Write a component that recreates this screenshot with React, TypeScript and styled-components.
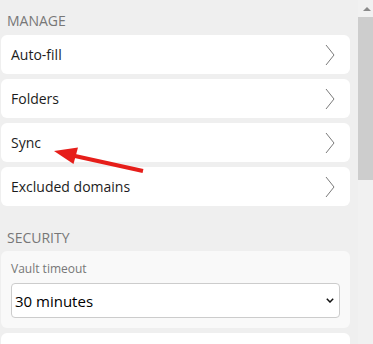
import React from "react";
import styled, { createGlobalStyle } from "styled-components";

const GlobalStyle = createGlobalStyle`
  html, body {
    margin: 0;
    padding: 0;
    background: #efefef;
    font-family: "Open Sans", "Liberation Sans", sans-serif;
  }
`;

const Page = styled.div`
  position: relative;
  display: flex;
  width: 373px;
  height: 344px;
  overflow: hidden;
  background: #efefef;
`;

const Content = styled.div`
  width: 349px;
  padding: 0 4px 0 1px;
  flex: 0 0 auto;
`;

const SectionTitle = styled.div<{ $top: number; $bottom: number }>`
  font-size: 14px;
  line-height: 19px;
  color: #777777;
  text-transform: uppercase;
  padding: ${(p) => p.$top}px 0 ${(p) => p.$bottom}px 6px;
`;

const CardList = styled.div`
  display: flex;
  flex-direction: column;
  gap: 5px;
`;

const Card = styled.div`
  display: flex;
  align-items: center;
  justify-content: space-between;
  height: 39px;
  padding: 0 15px 0 10px;
  background: #ffffff;
  border-radius: 6px;
  font-size: 14px;
  color: #1c1c1c;
  cursor: pointer;
`;

const FieldCard = styled.div`
  background: #f9f9f9;
  border-radius: 6px;
  padding: 10px;
`;

const FieldLabel = styled.div`
  font-size: 12px;
  line-height: 16px;
  color: #777777;
  margin-bottom: 6px;
`;

const SelectWrap = styled.div`
  position: relative;
`;

const Select = styled.select`
  appearance: none;
  width: 100%;
  height: 35px;
  box-sizing: border-box;
  border: 1px solid #cccccc;
  border-radius: 4px;
  background: #ffffff;
  padding: 0 24px 0 3px;
  font-family: "Open Sans", "Liberation Sans", sans-serif;
  font-size: 15px;
  color: #000000;
  outline: none;
`;

const SelectCaret = styled.svg`
  position: absolute;
  right: 6px;
  top: 15px;
  pointer-events: none;
`;

const NextCard = styled.div`
  height: 30px;
  margin-top: 5px;
  background: #ffffff;
  border-radius: 6px;
`;

const Scrollbar = styled.div`
  width: 17px;
  flex: 0 0 auto;
  margin-left: 4px;
  background: #f1f1f1;
  display: flex;
  flex-direction: column;
`;

const ScrollButton = styled.div`
  height: 17px;
  display: flex;
  align-items: center;
  justify-content: center;
`;

const ScrollThumb = styled.div`
  height: 163px;
  background: #cdcdcd;
`;

const Edge = styled.div`
  flex: 1;
  background: #f5f5f5;
`;

const Annotation = styled.svg`
  position: absolute;
  left: 0;
  top: 0;
  pointer-events: none;
`;

function Chevron() {
  return (
    <svg width="10" height="22" viewBox="0 0 10 22">
      <path d="M1 1 L9 11 L1 21" fill="none" stroke="#7a7a7a" strokeWidth="1" />
    </svg>
  );
}

const manageItems = ["Auto-fill", "Folders", "Sync", "Excluded domains"];

export default function App() {
  return (
    <Page>
      <GlobalStyle />
      <Content>
        <SectionTitle $top={11} $bottom={5}>Manage</SectionTitle>
        <CardList>
          {manageItems.map((item) => (
            <Card key={item}>
              <span>{item}</span>
              <Chevron />
            </Card>
          ))}
        </CardList>
        <SectionTitle $top={22} $bottom={4}>Security</SectionTitle>
        <FieldCard>
          <FieldLabel>Vault timeout</FieldLabel>
          <SelectWrap>
            <Select defaultValue="30">
              <option value="30">30 minutes</option>
            </Select>
            <SelectCaret width="8" height="5" viewBox="0 0 8 5">
              <path d="M0.8 0.8 L4 4 L7.2 0.8" fill="none" stroke="#111" strokeWidth="1.5" />
            </SelectCaret>
          </SelectWrap>
        </FieldCard>
        <NextCard />
      </Content>
      <Scrollbar>
        <ScrollButton>
          <svg width="8" height="5" viewBox="0 0 8 5">
            <path d="M0 5 L4 1 L8 5 Z" fill="#8a8a8a" />
          </svg>
        </ScrollButton>
        <ScrollThumb />
      </Scrollbar>
      <Edge />
      <Annotation width="373" height="344" viewBox="0 0 373 344">
        <line x1="75" y1="156" x2="143" y2="171" stroke="#e61e1a" strokeWidth="4" />
        <polygon points="54,151 78,147.5 73.5,164" fill="#e61e1a" />
      </Annotation>
    </Page>
  );
}
